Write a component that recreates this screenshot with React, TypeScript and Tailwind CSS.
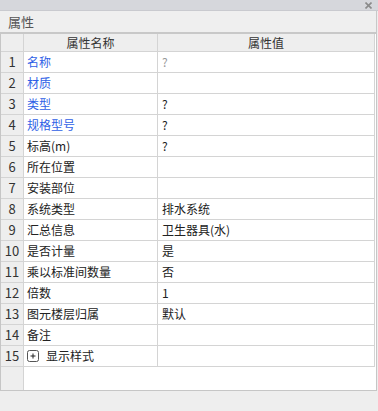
import React from 'react';

interface Row {
  name: string;
  value?: string;
  blue?: boolean;
  muted?: boolean;
  expand?: boolean;
}

const rows: Row[] = [
  { name: '名称', value: '?', blue: true, muted: true },
  { name: '材质', blue: true },
  { name: '类型', value: '?', blue: true },
  { name: '规格型号', value: '?', blue: true },
  { name: '标高(m)', value: '?' },
  { name: '所在位置' },
  { name: '安装部位' },
  { name: '系统类型', value: '排水系统' },
  { name: '汇总信息', value: '卫生器具(水)' },
  { name: '是否计量', value: '是' },
  { name: '乘以标准间数量', value: '否' },
  { name: '倍数', value: '1' },
  { name: '图元楼层归属', value: '默认' },
  { name: '备注' },
  { name: '显示样式', expand: true },
];

function PlusBox() {
  return (
    <svg width="12" height="12" viewBox="0 0 12 12" className="shrink-0">
      <rect x="0.5" y="0.5" width="11" height="11" rx="2" fill="white" stroke="#555" />
      <path d="M3.5 6h5M6 3.5v5" stroke="#222" strokeWidth="1" />
    </svg>
  );
}

export default function App() {
  return (
    <div
      className="w-[378px] h-[411px] bg-[#eeeeee] flex flex-col text-[12px] text-[#222]"
      style={{ fontFamily: '"Noto Sans CJK SC", "Liberation Sans", sans-serif' }}
    >
      <div className="h-[11px] bg-[#d6d7dc] border-b border-[#c9cacf] flex items-center justify-end pr-[6px]">
        <svg width="7" height="7" viewBox="0 0 7 7">
          <path d="M0.5 0.5l6 6M6.5 0.5l-6 6" stroke="#8a8a8a" strokeWidth="1.6" />
        </svg>
      </div>
      <div className="h-[21px] w-[377px] bg-[#efefef] border-r border-[#c8c8c8] flex items-center pl-[8px] text-[13px] text-[#555]">
        属性
      </div>
      <div className="h-[2px] w-[377px] bg-[#c8c8c8]" />
      <div className="h-[357px] w-[377px] bg-white border-l border-r border-b border-[#c6c6c6] flex flex-col">
        <div className="flex h-[18px] bg-[#eeeeee] border-b border-[#d4d4d4] w-[374px]">
          <div className="w-[23px] border-r border-[#d4d4d4]" />
          <div className="w-[134px] border-r border-[#d4d4d4] flex items-center justify-center text-[#333]">属性名称</div>
          <div className="w-[217px] border-r border-[#d4d4d4] flex items-center justify-center text-[#333]">属性值</div>
        </div>
        {rows.map((r, i) => (
          <div key={i} className="flex h-[21px] border-b border-[#d4d4d4] w-[374px]">
            <div className="w-[23px] bg-[#eeeeee] border-r border-[#d4d4d4] flex items-center justify-center text-[13px] text-[#333]">
              {i + 1}
            </div>
            <div
              className={`w-[134px] border-r border-[#d4d4d4] flex items-center pl-[3px] gap-[7px] ${
                r.blue ? 'text-[#2f5fe6]' : 'text-[#222]'
              }`}
            >
              {r.expand && <PlusBox />}
              {r.name}
            </div>
            <div
              className={`w-[217px] border-r border-[#d4d4d4] flex items-center pl-[4px] ${
                r.muted ? 'text-[#999]' : 'text-[#222]'
              }`}
            >
              {r.value}
            </div>
          </div>
        ))}
        <div className="flex-1 flex">
          <div className="w-[23px] bg-[#eeeeee] border-r border-[#d4d4d4]" />
          <div className="flex-1" />
        </div>
      </div>
    </div>
  );
}
